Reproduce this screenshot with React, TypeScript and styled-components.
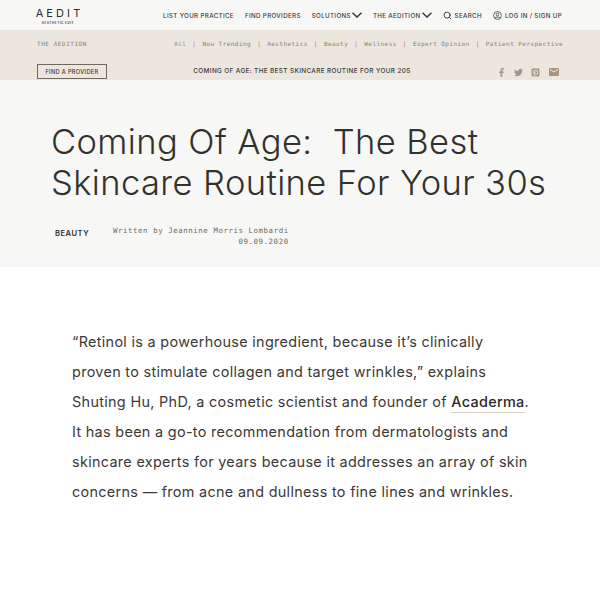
import styled, { createGlobalStyle } from "styled-components";
import { FaFacebookF, FaTwitter, FaPinterestSquare } from "react-icons/fa";
import { MdEmail } from "react-icons/md";
import { FiSearch } from "react-icons/fi";

const GlobalStyle = createGlobalStyle`
  html, body {
    margin: 0;
    padding: 0;
    background: #fff;
    overflow: hidden;
  }
  * { box-sizing: border-box; }
`;

const sans = `"Inter", "Noto Sans", "Liberation Sans", sans-serif`;
const mono = `"DejaVu Sans Mono", "Liberation Mono", monospace`;

const Page = styled.div`
  width: 600px;
  height: 600px;
  overflow: hidden;
  font-family: ${sans};
  color: #2f2d2a;
`;

const Nav = styled.header`
  height: 30px;
  background: #f7f7f5;
  display: flex;
  align-items: center;
  justify-content: space-between;
  padding: 0 38px 0 37px;
`;

const Logo = styled.div`
  display: flex;
  flex-direction: column;
  align-items: center;
  width: 42px;
  margin-top: 3px;
`;

const LogoWord = styled.span`
  font-size: 11px;
  line-height: 12px;
  letter-spacing: 3.1px;
  margin-right: -3px;
  font-weight: 400;
`;

const LogoSub = styled.span`
  margin-top: 2px;
  font-size: 3px;
  line-height: 5px;
  letter-spacing: 0.55px;
  font-weight: 600;
  white-space: nowrap;
`;

const Links = styled.nav`
  display: flex;
  align-items: center;
  gap: 11px;
`;

const NavLink = styled.a<{ $gap?: number }>`
  display: flex;
  align-items: center;
  gap: ${(p) => p.$gap ?? 3}px;
  font-size: 6.2px;
  font-weight: 500;
  letter-spacing: 0.35px;
  color: #3a3835;
  white-space: nowrap;
`;

const Sub = styled.section`
  height: 50px;
  background: #ebe7df;
  display: flex;
  flex-direction: column;
  padding: 0 37px;
`;

const SubRow = styled.div`
  height: 27px;
  display: flex;
  align-items: center;
  justify-content: space-between;
`;

const Edition = styled.span`
  font-family: ${mono};
  font-size: 6px;
  letter-spacing: 0.55px;
  color: #8a7f6d;
`;

const Cats = styled.div`
  display: flex;
  align-items: center;
  gap: 6px;
  font-family: ${mono};
  font-size: 6px;
  letter-spacing: 0.45px;
  color: #8a7f6d;
`;

const Pipe = styled.span`
  color: #b0785a;
`;

const ShareRow = styled.div`
  height: 23px;
  display: flex;
  align-items: flex-start;
  justify-content: space-between;
`;

const Provider = styled.a`
  width: 70px;
  height: 15px;
  margin-top: 7px;
  border: 1px solid #6f6a60;
  display: flex;
  align-items: center;
  justify-content: center;
  font-size: 5.6px;
  font-weight: 500;
  letter-spacing: 0.35px;
  color: #3a3835;
`;

const ShareTitle = styled.span`
  margin-top: 9px;
  font-size: 6.4px;
  line-height: 11px;
  font-weight: 500;
  letter-spacing: 0.36px;
  color: #3a3835;
`;

const Icons = styled.div`
  margin-top: 9px;
  margin-right: 3px;
  display: flex;
  align-items: center;
  gap: 8px;
  color: #a39683;
`;

const Hero = styled.section`
  height: 187px;
  background: #f7f7f5;
  padding: 41px 51px 0;
`;

const Title = styled.h1`
  margin: 0;
  font-size: 34.5px;
  line-height: 41px;
  font-weight: 300;
  letter-spacing: 0.4px;
  color: #33312e;
  white-space: nowrap;
`;

const Meta = styled.div`
  display: flex;
  align-items: flex-start;
  margin-top: 23px;
  padding-left: 4px;
`;

const Category = styled.span`
  width: 58px;
  font-size: 7.6px;
  line-height: 15px;
  font-weight: 600;
  letter-spacing: 0.5px;
`;

const Byline = styled.div`
  font-family: ${mono};
  font-size: 7.4px;
  line-height: 10.5px;
  letter-spacing: 0.57px;
  color: #6f6a60;
  text-align: right;
`;

const Article = styled.article`
  padding: 59.5px 72px 0;
`;

const Paragraph = styled.p`
  margin: 0;
  font-size: 14.4px;
  line-height: 30.1px;
  letter-spacing: 0.32px;
  color: #3b3936;
  white-space: nowrap;
`;

const Anchor = styled.a`
  font-weight: 500;
  color: #2a2826;
  border-bottom: 1px solid #d5cfbf;
  padding-bottom: 2px;
`;

const Chevron = () => (
  <svg width="10" height="6" viewBox="0 0 10 6" fill="none" stroke="currentColor" strokeWidth="1.5">
    <polyline points="0.5,0.8 5,5 9.5,0.8" />
  </svg>
);

const UserIcon = () => (
  <svg width="9" height="9" viewBox="0 0 24 24" fill="none" stroke="currentColor" strokeWidth="2">
    <circle cx="12" cy="12" r="10.5" />
    <circle cx="12" cy="9.5" r="3.5" />
    <path d="M5 19c2-4 12-4 14 0" />
  </svg>
);

const App = (): JSX.Element => {
  return (
    <Page>
      <GlobalStyle />
      <Nav>
        <Logo>
          <LogoWord>AEDIT</LogoWord>
          <LogoSub>AESTHETIC EDIT</LogoSub>
        </Logo>
        <Links>
          <NavLink>LIST YOUR PRACTICE</NavLink>
          <NavLink>FIND PROVIDERS</NavLink>
          <NavLink $gap={1}>
            SOLUTIONS
            <Chevron />
          </NavLink>
          <NavLink $gap={1}>
            THE AEDITION
            <Chevron />
          </NavLink>
          <NavLink>
            <FiSearch size={9} strokeWidth={2.5} /> SEARCH
          </NavLink>
          <NavLink>
            <UserIcon /> LOG IN / SIGN UP
          </NavLink>
        </Links>
      </Nav>
      <Sub>
        <SubRow>
          <Edition>THE AEDITION</Edition>
          <Cats>
            <span>All</span>
            <Pipe>|</Pipe>
            <span>Now Trending</span>
            <Pipe>|</Pipe>
            <span>Aesthetics</span>
            <Pipe>|</Pipe>
            <span>Beauty</span>
            <Pipe>|</Pipe>
            <span>Wellness</span>
            <Pipe>|</Pipe>
            <span>Expert Opinion</span>
            <Pipe>|</Pipe>
            <span>Patient Perspective</span>
          </Cats>
        </SubRow>
        <ShareRow>
          <Provider>FIND A PROVIDER</Provider>
          <ShareTitle>COMING OF AGE: THE BEST SKINCARE ROUTINE FOR YOUR 20S</ShareTitle>
          <Icons>
            <FaFacebookF size={9} />
            <FaTwitter size={9} />
            <FaPinterestSquare size={9} />
            <MdEmail size={12} />
          </Icons>
        </ShareRow>
      </Sub>
      <Hero>
        <Title>
          Coming Of Age:&nbsp; The Best
          <br />
          Skincare Routine For Your 30s
        </Title>
        <Meta>
          <Category>BEAUTY</Category>
          <Byline>
            Written by Jeannine Morris Lombardi
            <br />
            09.09.2020
          </Byline>
        </Meta>
      </Hero>
      <Article>
        <Paragraph>
          “Retinol is a powerhouse ingredient, because it’s clinically
          <br />
          proven to stimulate collagen and target wrinkles,” explains
          <br />
          Shuting Hu, PhD, a cosmetic scientist and founder of <Anchor>Acaderma</Anchor>.
          <br />
          It has been a go-to recommendation from dermatologists and
          <br />
          skincare experts for years because it addresses an array of skin
          <br />
          concerns — from acne and dullness to fine lines and wrinkles.
        </Paragraph>
      </Article>
    </Page>
  );
};

export default App;
